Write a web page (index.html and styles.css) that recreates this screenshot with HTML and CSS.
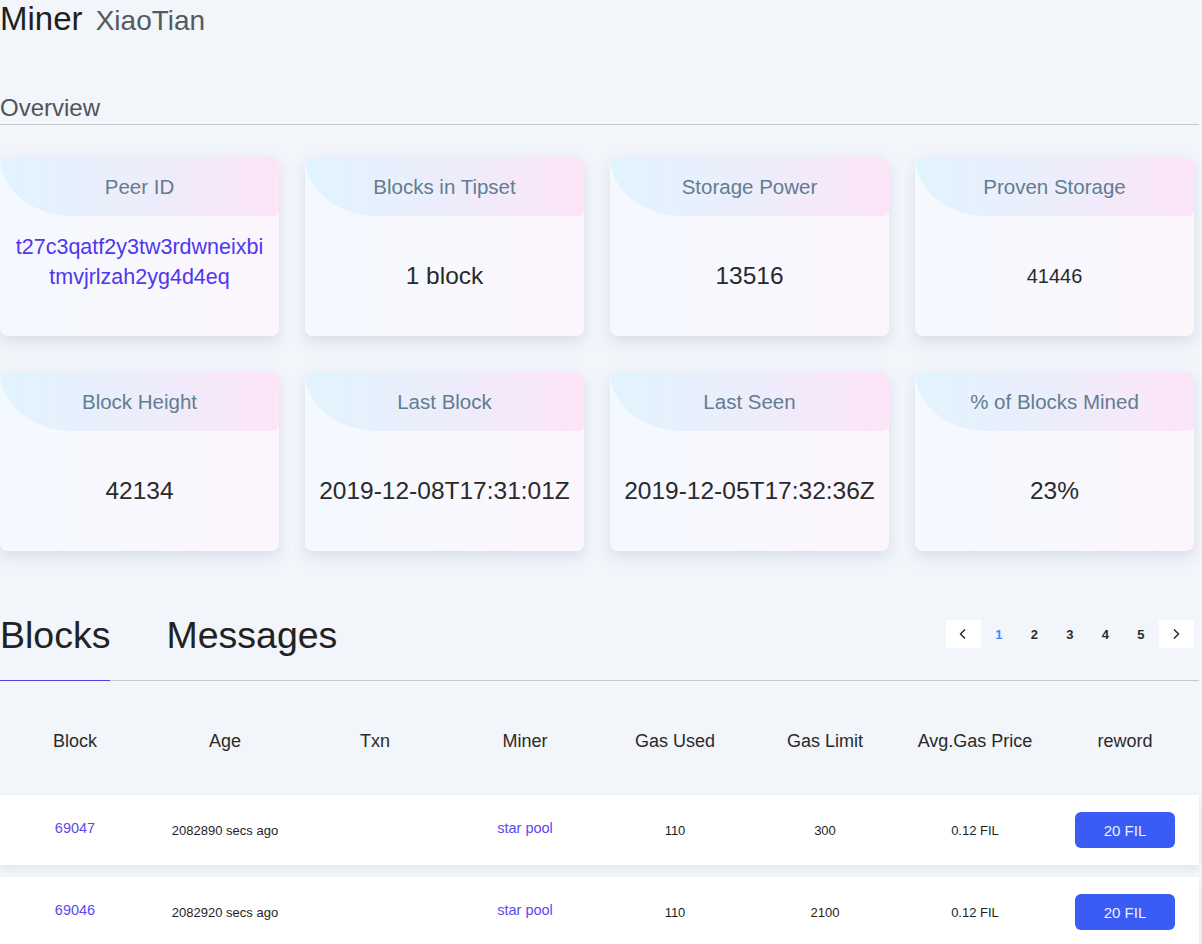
FILE: index.html
```html
<!DOCTYPE html>
<html lang="en">
<head>
<meta charset="utf-8">
<title>Miner XiaoTian</title>
<link rel="stylesheet" href="styles.css">
</head>
<body>
<div class="page">
  <h1 class="title">Miner <span class="sub">XiaoTian</span></h1>
  <h2 class="section">Overview</h2>

  <div class="cards">
    <div class="card">
      <div class="card-head">Peer ID</div>
      <div class="card-body card-body--top"><span class="peer">t27c3qatf2y3tw3rdwneixbi<br>tmvjrlzah2yg4d4eq</span></div>
    </div>
    <div class="card">
      <div class="card-head">Blocks in Tipset</div>
      <div class="card-body">1 block</div>
    </div>
    <div class="card">
      <div class="card-head">Storage Power</div>
      <div class="card-body">13516</div>
    </div>
    <div class="card">
      <div class="card-head">Proven Storage</div>
      <div class="card-body card-body--small">41446</div>
    </div>
    <div class="card">
      <div class="card-head">Block Height</div>
      <div class="card-body">42134</div>
    </div>
    <div class="card">
      <div class="card-head">Last Block</div>
      <div class="card-body">2019-12-08T17:31:01Z</div>
    </div>
    <div class="card">
      <div class="card-head">Last Seen</div>
      <div class="card-body">2019-12-05T17:32:36Z</div>
    </div>
    <div class="card">
      <div class="card-head">% of Blocks Mined</div>
      <div class="card-body">23%</div>
    </div>
  </div>

  <div class="tabbar">
    <div class="tabs">
      <div class="tab tab--active">Blocks</div>
      <div class="tab">Messages</div>
    </div>
    <div class="pager">
      <div class="pg pg--btn"><svg width="10" height="12" viewBox="0 0 10 12"><polyline points="7,1.5 2.5,6 7,10.5" fill="none" stroke="#222" stroke-width="1.4"/></svg></div>
      <div class="pg pg--active">1</div>
      <div class="pg">2</div>
      <div class="pg">3</div>
      <div class="pg">4</div>
      <div class="pg">5</div>
      <div class="pg pg--btn"><svg width="10" height="12" viewBox="0 0 10 12"><polyline points="3,1.5 7.5,6 3,10.5" fill="none" stroke="#222" stroke-width="1.4"/></svg></div>
    </div>
  </div>

  <div class="table">
    <div class="thead">
      <div>Block</div><div>Age</div><div>Txn</div><div>Miner</div><div>Gas Used</div><div>Gas Limit</div><div>Avg.Gas Price</div><div>reword</div>
    </div>
    <div class="trow">
      <div class="link">69047</div>
      <div>2082890 secs ago</div>
      <div></div>
      <div class="link">star pool</div>
      <div>110</div>
      <div>300</div>
      <div>0.12 FIL</div>
      <div><span class="reward">20 FIL</span></div>
    </div>
    <div class="trow">
      <div class="link">69046</div>
      <div>2082920 secs ago</div>
      <div></div>
      <div class="link">star pool</div>
      <div>110</div>
      <div>2100</div>
      <div>0.12 FIL</div>
      <div><span class="reward">20 FIL</span></div>
    </div>
  </div>
</div>
</body>
</html>
```

FILE: styles.css
```css
html, body {
  margin: 0;
  padding: 0;
  background: #f2f5fa;
  font-family: "Liberation Sans", Arial, sans-serif;
  color: #222;
}

.page {
  width: 1200px;
}

.title {
  margin: 0;
  font-size: 33px;
  line-height: 38px;
  font-weight: normal;
  color: #1f1f1f;
}

.sub {
  font-size: 28px;
  color: #555a60;
  margin-left: 4px;
}

.section {
  margin: 54px 0 0 0;
  width: 1199px;
  font-size: 24px;
  line-height: 28px;
  font-weight: normal;
  color: #4f5459;
  padding-bottom: 2px;
  border-bottom: 1px solid #c6c8cc;
}

.cards {
  margin-top: 32px;
  width: 1194px;
  display: grid;
  grid-template-columns: repeat(4, 1fr);
  column-gap: 26px;
  row-gap: 36px;
}

.card {
  height: 179px;
  display: flex;
  flex-direction: column;
  border-radius: 8px;
  overflow: hidden;
  background: linear-gradient(90deg, #f4f9fe 0%, #f8f8fe 50%, #fdf5fc 100%);
  box-shadow: 0 6px 14px rgba(96, 108, 160, 0.16);
}

.card-head {
  height: 59px;
  flex: none;
  display: flex;
  align-items: center;
  justify-content: center;
  background: linear-gradient(90deg, #e1f4fe 0%, #ecedfb 50%, #fde4f8 100%);
  border-bottom-left-radius: 72px 59px;
  border-bottom-right-radius: 6px;
  font-size: 20.5px;
  color: #627d90;
}

.card-body {
  flex: 1;
  display: flex;
  align-items: center;
  justify-content: center;
  font-size: 24.5px;
  color: #2a2a2a;
  white-space: nowrap;
}

.card-body--top {
  align-items: flex-start;
  padding-top: 16px;
}

.card-body--small {
  font-size: 20px;
}

.peer {
  font-size: 21.5px;
  line-height: 30px;
  color: #5136ee;
  text-align: center;
}

.tabbar {
  margin-top: 64px;
  width: 1199px;
  display: flex;
  justify-content: space-between;
  align-items: flex-start;
  border-bottom: 1px solid #c6c8cc;
}

.tabs {
  display: flex;
  gap: 56px;
}

.tab {
  font-size: 37.5px;
  line-height: 40px;
  padding-bottom: 25px;
  color: #222;
  margin-bottom: -1px;
  border-bottom: 1px solid transparent;
}

.tab--active {
  border-bottom-color: #4a3fe6;
}

.pager {
  margin-top: 5px;
  margin-right: 5px;
  display: flex;
}

.pg {
  width: 35.5px;
  height: 28px;
  display: flex;
  align-items: center;
  justify-content: center;
  font-size: 13px;
  font-weight: bold;
  color: #2b2b2b;
}

.pg--btn {
  background: #fff;
}

.pg--active {
  color: #3a8ef6;
}

.table {
  margin-top: 18px;
  width: 1199px;
}

.thead {
  height: 84px;
  display: grid;
  grid-template-columns: repeat(8, 150px);
  align-items: center;
  justify-items: center;
  font-size: 18px;
  color: #2a2a2a;
  margin-bottom: 12px;
}

.trow {
  height: 70px;
  display: grid;
  grid-template-columns: repeat(8, 150px);
  align-items: center;
  justify-items: center;
  background: #fff;
  box-shadow: 0 4px 8px rgba(80, 90, 120, 0.09);
  margin-bottom: 12px;
  font-size: 13px;
  color: #1e1e1e;
}

.trow .link {
  font-size: 14.5px;
  color: #6048ef;
  padding-bottom: 5px;
}

.reward {
  display: flex;
  width: 100px;
  height: 36px;
  align-items: center;
  justify-content: center;
  border-radius: 6px;
  background: #3b5bf5;
  color: #eef0ff;
  font-size: 15px;
}
```
